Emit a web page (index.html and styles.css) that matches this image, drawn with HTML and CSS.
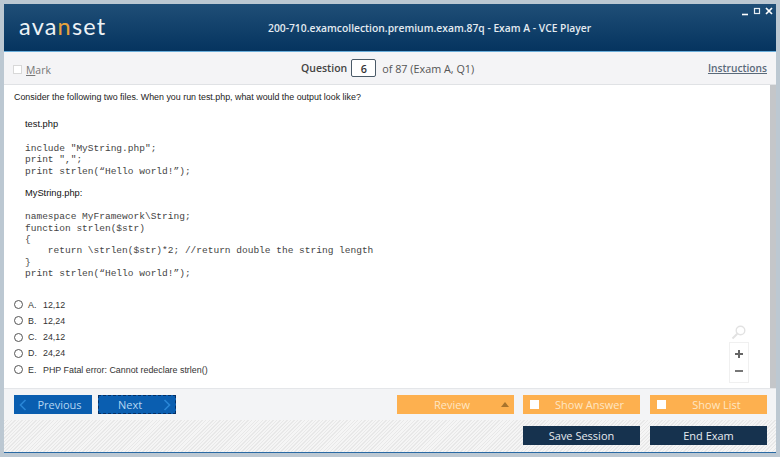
FILE: index.html
```html
<!DOCTYPE html>
<html lang="en">
<head>
<meta charset="utf-8">
<title>VCE Player</title>
<link rel="stylesheet" href="styles.css">
</head>
<body>
<div class="window">
  <header class="header">
    <div class="logo">ava<span class="logo-n">n</span>set</div>
    <div class="title">200-710.examcollection.premium.exam.87q - Exam A - VCE Player</div>
    <div class="controls">
      <svg width="32" height="10" viewBox="0 0 32 10"><path d="M0 8.5h6" stroke="#fff" stroke-width="1.6"/><rect x="12.5" y="2.5" width="5" height="5" fill="none" stroke="#e6edf3" stroke-width="1.2"/><path d="M24 2l6 6M30 2l-6 6" stroke="#fff" stroke-width="1.7"/></svg>
    </div>
  </header>
  <div class="toolbar">
    <label class="mark"><span class="mark-box"></span><span><u>M</u>ark</span></label>
    <div class="question"><b>Question</b><span class="qnum">6</span><span>of 87 (Exam A, Q1)</span></div>
    <a class="instructions">Instructions</a>
  </div>
  <main class="content">
    <p class="prompt">Consider the following two files. When you run test.php, what would the output look like?</p>
    <div class="file first">test.php</div>
    <pre class="code c1">include "MyString.php";
print ",";
print strlen(“Hello world!”);</pre>
    <div class="file second">MyString.php:</div>
    <pre class="code c2">namespace MyFramework\String;
function strlen($str)
{
    return \strlen($str)*2; //return double the string length
}
print strlen(“Hello world!”);</pre>
    <ul class="options">
      <li><span class="radio"></span><span class="opt-l">A.</span><span>12,12</span></li>
      <li><span class="radio"></span><span class="opt-l">B.</span><span>12,24</span></li>
      <li><span class="radio"></span><span class="opt-l">C.</span><span>24,12</span></li>
      <li><span class="radio"></span><span class="opt-l">D.</span><span>24,24</span></li>
      <li><span class="radio"></span><span class="opt-l">E.</span><span>PHP Fatal error: Cannot redeclare strlen()</span></li>
    </ul>
    <div class="zoomer">
      <svg class="lens" width="16" height="15" viewBox="0 0 16 15"><circle cx="9.5" cy="5.5" r="4.3" fill="none" stroke="#e2e2e2" stroke-width="1.4"/><path d="M6.3 8.8L1.5 13.5" stroke="#e2e2e2" stroke-width="2"/></svg>
      <div class="zoom-box">
        <svg width="10" height="10" viewBox="0 0 10 10"><path d="M5 1v8M1 5h8" stroke="#666" stroke-width="2"/></svg>
        <svg width="10" height="10" viewBox="0 0 10 10"><path d="M1 5h8" stroke="#777" stroke-width="2"/></svg>
      </div>
    </div>
  </main>
  <div class="navbar">
    <button class="btn blue"><svg class="chev" width="8" height="12" viewBox="0 0 8 12"><path d="M6.5 1L1.5 6l5 5" fill="none" stroke="#2a86d6" stroke-width="1.6"/></svg><span class="blue-l">Previous</span></button>
    <button class="btn blue next"><span class="blue-l">Next</span><svg class="chev" width="8" height="12" viewBox="0 0 8 12"><path d="M1.5 1l5 5-5 5" fill="none" stroke="#2a86d6" stroke-width="1.6"/></svg></button>
    <div class="spacer"></div>
    <button class="btn orange review"><span>Review</span><i class="tri"></i></button>
    <button class="btn orange check"><i class="cb"></i><span>Show Answer</span></button>
    <button class="btn orange check"><i class="cb"></i><span>Show List</span></button>
  </div>
  <div class="footer">
    <button class="btn dark">Save Session</button>
    <button class="btn dark">End Exam</button>
  </div>
</div>
</body>
</html>
```
FILE: styles.css
```css
* { box-sizing: border-box; }
html, body { margin: 0; height: 100%; }
body {
  width: 780px; height: 457px; overflow: hidden;
  background: #bcc8d2;
  padding: 4px 4px 0;
  font-family: "Liberation Sans", Arial, sans-serif;
}
.window { width: 772px; height: 449px; background: #f3f4f6; border-bottom: 1px solid #2a6aa4; position: relative; }
.header {
  height: 48px; position: relative; display: flex; align-items: center;
  padding: 0 0 4px 15px;
  background: linear-gradient(#1f4e77, #05345f);
  border-bottom: 1px solid #6aaedb;
}
.logo { font-family: "Lato", sans-serif; font-weight: 400; font-size: 23.5px; letter-spacing: 1.2px; color: #eef3f6; width: 249px; }
.logo-n { color: #e6a23c; }
.title { font-family: "Open Sans", sans-serif; font-weight: 600; font-size: 10.3px; color: #e4ebf1; white-space: nowrap; position: relative; top: 2px; }
.controls { position: absolute; top: 2px; right: 2px; line-height: 0; }
.toolbar {
  height: 33px; display: grid; grid-template-columns: 297px auto 1fr; align-items: center;
  background: #f4f4f6; border-bottom: 1px solid #e0e2e5;
  font-family: "Open Sans", sans-serif; color: #5a5a5a;
}
.mark { display: flex; align-items: center; gap: 4px; padding: 3px 0 0 9px; font-size: 10.4px; color: #777; }
.mark-box { width: 9px; height: 9px; background: #fff; border: 1px solid #d8d8d8; }
.question { display: flex; align-items: center; font-size: 10.8px; color: #555; }
.question b { font-weight: 600; font-size: 10.5px; color: #444; }
.qnum { width: 25px; height: 18px; margin: 0 6px 0 4px; background: #fff; border: 1px solid #4a5a68; border-radius: 2px; display: flex; align-items: center; justify-content: center; color: #333; font-weight: 600; }
.instructions { justify-self: end; padding-right: 9px; font-size: 10.2px; font-weight: 600; color: #5a6a7a; text-decoration: underline; }
.content { height: 303px; position: relative; background: #fff; border-right: 6px solid #c4c6c9; padding: 7px 10px 0; color: #222; font-size: 8.9px; }
.prompt { margin: 0; line-height: 11px; }
.file { line-height: 11px; padding-left: 11px; font-size: 9.3px; color: #111; }
.first { margin-top: 16px; }
.second { margin-top: 11px; }
.code { margin: 0; padding-left: 11px; font-family: "Liberation Mono", monospace; font-size: 9.53px; line-height: 11.4px; color: #444; }
.c1 { margin-top: 13px; }
.c2 { margin-top: 12px; }
.options { list-style: none; margin: 17px 0 0; padding: 0; }
.options li { display: flex; align-items: center; height: 16.2px; color: #333; }
.radio { width: 9px; height: 9px; border: 1px solid #555; border-radius: 50%; background: #fff; margin-right: 5px; }
.opt-l { width: 15px; }
.zoomer { position: absolute; right: 21px; top: 240px; display: flex; flex-direction: column; align-items: center; width: 20px; }
.zoom-box { width: 20px; height: 41px; margin-top: 2px; border: 1px solid #f0f0f0; display: flex; flex-direction: column; justify-content: space-around; align-items: center; padding: 2px 0; }
.navbar { height: 32px; display: flex; align-items: center; gap: 6px; padding: 0 9px 0 10px; background: #f3f4f6; border-top: 1px solid #e4e6e9; }
.spacer { flex: 1; }
.btn { border: 0; margin: 0; height: 19px; font-family: "Open Sans", sans-serif; font-size: 11px; display: flex; align-items: center; padding: 0; }
.blue { width: 78px; background: #0a5eb0; color: #b5d6f2; padding: 0 5px; justify-content: space-between; }
.next { outline: 1px dashed #032f66; outline-offset: -1px; }
.blue-l { flex: 1; text-align: center; padding: 0 0 0 5px; }
.next .blue-l { padding: 0 6px 0 0; }
.orange { width: 117px; background: #fdb04f; color: #fde6c4; }
.review { justify-content: space-between; padding: 0 5px 0 37px; margin-right: 3px; }
.tri { width: 0; height: 0; border: 4px solid transparent; border-top: 0; border-bottom: 5px solid #a8732c; }
.check { padding-left: 7px; }
.check span { flex: 1; text-align: center; }
.cb { width: 9px; height: 9px; background: #fff; }
.check:last-child { margin-left: 4px; }
.footer {
  height: 32px; display: flex; justify-content: flex-end; align-items: center; gap: 10px; padding: 0 9px 2px 0;
  background: repeating-linear-gradient(135deg, #e8e8e8 0, #e8e8e8 1px, #f5f5f5 1px, #f5f5f5 2.5px);
}
.dark { width: 117px; background: #16324e; color: #e6ebf0; justify-content: center; }
```
